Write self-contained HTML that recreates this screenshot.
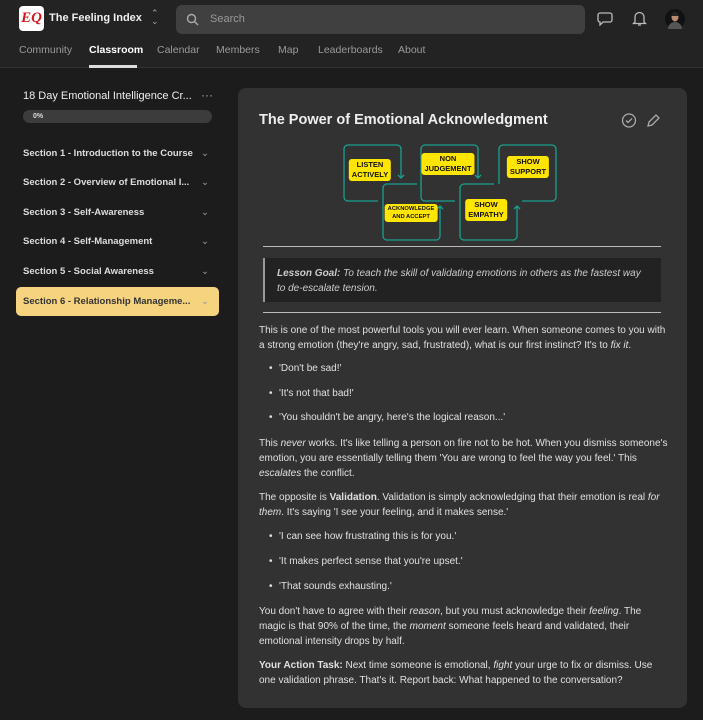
<!DOCTYPE html>
<html><head><style>
*{margin:0;padding:0;box-sizing:border-box}
body{width:703px;height:720px;background:#1c1c1c;font-family:"Liberation Sans",sans-serif;color:#e6e6e6;overflow:hidden;position:relative}
.hdr{position:absolute;left:0;top:0;width:703px;height:68px;background:#232323;border-bottom:1px solid #333}
.logo{position:absolute;left:19px;top:6px;width:25px;height:25px;background:#fff;border-radius:4px;color:#d8141c;font:italic bold 15px "Liberation Serif",serif;text-align:center;line-height:25px}
.brand{position:absolute;left:49px;top:12px;font-size:11px;font-weight:bold;color:#f0f0f0}
.search{position:absolute;left:176px;top:5px;width:409px;height:29px;background:#404040;border-radius:6px;color:#999;font-size:11px;line-height:29px;padding-left:34px}
.nav{position:absolute;top:44px;font-size:10.5px;color:#9a9a9a}
.main{position:absolute;left:238px;top:88px;width:449px;height:620px;background:#323232;border-radius:8px}
.side{position:absolute;left:16px;width:203px;height:29px;font-size:9.5px;font-weight:bold;color:#ddd;line-height:29px;padding-left:7px}
.chev{position:absolute;right:10px;top:0;color:#999;font-weight:normal}
.txt{position:absolute;left:259px;width:410px;font-size:10px;line-height:15px;color:#e0e0e0}
.li{position:absolute;left:279px;font-size:10px;color:#e0e0e0}
.li:before{content:"•";position:absolute;left:-10px}
.lab{position:absolute;background:#ffe500;color:#111;font-size:7.5px;font-weight:bold;text-align:center;line-height:10px;border-radius:3px;padding:1px 3px;transform:translate(-50%,-50%);white-space:nowrap}
</style></head><body>
<div class="hdr">
<div class="logo">EQ</div>
<div class="brand">The Feeling Index</div>
<div style="position:absolute;left:151px;top:9px;color:#aaa;font-size:9px;line-height:8px">⌃<br>⌄</div>
<div class="search">Search</div>
<svg style="position:absolute;left:186px;top:13px" width="13" height="13" viewBox="0 0 13 13"><circle cx="5.5" cy="5.5" r="4" fill="none" stroke="#aaa" stroke-width="1.4"/><path d="M8.5 8.5L12 12" stroke="#aaa" stroke-width="1.4"/></svg>
<svg style="position:absolute;left:597px;top:11px" width="16" height="15" viewBox="0 0 16 15"><path d="M3 2h10a2 2 0 0 1 2 2v5a2 2 0 0 1-2 2H6l-3 3v-3a2 2 0 0 1-2-2V4a2 2 0 0 1 2-2z" fill="none" stroke="#bbb" stroke-width="1.3"/></svg>
<svg style="position:absolute;left:632px;top:10px" width="15" height="17" viewBox="0 0 15 17"><path d="M3 12V7a4.5 4.5 0 0 1 9 0v5l1.5 1.5h-12z M6 15h3" fill="none" stroke="#bbb" stroke-width="1.3"/></svg>
<svg style="position:absolute;left:665px;top:9px" width="20" height="20" viewBox="0 0 20 20"><circle cx="10" cy="10" r="10" fill="#111"/><path d="M3 20a7 7 0 0 1 14 0z" fill="#555"/><ellipse cx="10" cy="8" rx="3.5" ry="4.5" fill="#b88a70"/><path d="M6.5 7a3.5 4 0 0 1 7 0z" fill="#222"/></svg>
<div class="nav" style="left:19px">Community</div>
<div class="nav" style="left:89px;color:#fff;font-weight:bold">Classroom</div>
<div style="position:absolute;left:89px;top:65px;width:48px;height:3px;background:#ddd"></div>
<div class="nav" style="left:157px">Calendar</div>
<div class="nav" style="left:216px">Members</div>
<div class="nav" style="left:278px">Map</div>
<div class="nav" style="left:318px">Leaderboards</div>
<div class="nav" style="left:398px">About</div>
</div>

<div style="position:absolute;left:23px;top:90px;font-size:11px;color:#eee">18 Day Emotional Intelligence Cr...</div>
<div style="position:absolute;left:201px;top:88px;color:#aaa;font-size:12px">···</div>
<div style="position:absolute;left:23px;top:110px;width:189px;height:13px;background:#3c3c3c;border-radius:7px;font-size:7px;font-weight:bold;line-height:13px;padding-left:10px;color:#ddd">0%</div>
<div class="side" style="top:139px">Section 1 - Introduction to the Course<span class="chev">⌄</span></div>
<div class="side" style="top:168px">Section 2 - Overview of Emotional I...<span class="chev">⌄</span></div>
<div class="side" style="top:198px">Section 3 - Self-Awareness<span class="chev">⌄</span></div>
<div class="side" style="top:227px">Section 4 - Self-Management<span class="chev">⌄</span></div>
<div class="side" style="top:257px">Section 5 - Social Awareness<span class="chev">⌄</span></div>
<div class="side" style="top:287px;background:#f6d37f;color:#333;border-radius:5px">Section 6 - Relationship Manageme...<span class="chev">⌄</span></div>

<div class="main"></div>
<div style="position:absolute;left:259px;top:112px;font-size:14.5px;font-weight:bold;color:#eee">The Power of Emotional Acknowledgment</div>
<svg style="position:absolute;left:620px;top:112px" width="42" height="17" viewBox="0 0 42 17"><circle cx="9" cy="8.5" r="6.5" fill="none" stroke="#aaa" stroke-width="1.3"/><path d="M6 8.5l2 2 4-4" fill="none" stroke="#aaa" stroke-width="1.3"/><path d="M28 14l1-4 7-7 3 3-7 7z" fill="none" stroke="#aaa" stroke-width="1.3"/></svg>

<svg style="position:absolute;left:0;top:0" width="703" height="260" viewBox="0 0 703 260" fill="none" stroke="#19a08e" stroke-width="1.3">
<path d="M378 201H348a4 4 0 0 1-4-4V149a4 4 0 0 1 4-4h49a4 4 0 0 1 4 4v29"/><path d="M398 175l3 3 3-3"/>
<path d="M417 184H387a4 4 0 0 0-4 4v48a4 4 0 0 0 4 4h49a4 4 0 0 0 4-4v-30"/><path d="M437 209l3-3 3 3"/>
<path d="M455 201H425a4 4 0 0 1-4-4V149a4 4 0 0 1 4-4h49a4 4 0 0 1 4 4v29"/><path d="M475 175l3 3 3-3"/>
<path d="M494 184H464a4 4 0 0 0-4 4v48a4 4 0 0 0 4 4h49a4 4 0 0 0 4-4v-30"/><path d="M514 209l3-3 3 3"/>
<path d="M499 184V149a4 4 0 0 1 4-4h49a4 4 0 0 1 4 4v48a4 4 0 0 1-4 4h-30"/>
</svg>
<div class="lab" style="left:370px;top:170px">LISTEN<br>ACTIVELY</div>
<div class="lab" style="left:448px;top:164px">NON<br>JUDGEMENT</div>
<div class="lab" style="left:528px;top:167px">SHOW<br>SUPPORT</div>
<div class="lab" style="left:411px;top:213px;font-size:5.8px;line-height:8px">ACKNOWLEDGE<br>AND ACCEPT</div>
<div class="lab" style="left:486px;top:210px">SHOW<br>EMPATHY</div>

<div style="position:absolute;left:263px;top:246px;width:398px;height:1px;background:#bbb"></div>
<div style="position:absolute;left:263px;top:258px;width:398px;height:44px;background:#222;border-left:2px solid #999;padding:8px 12px;font-size:10px;line-height:15px;font-style:italic;color:#ccc"><b>Lesson Goal:</b> To teach the skill of validating emotions in others as the fastest way to de-escalate tension.</div>
<div style="position:absolute;left:263px;top:312px;width:398px;height:1px;background:#bbb"></div>

<div class="txt" style="top:323px">This is one of the most powerful tools you will ever learn. When someone comes to you with a strong emotion (they're angry, sad, frustrated), what is our first instinct? It's to <i>fix it</i>.</div>
<div class="li" style="top:363px">'Don't be sad!'</div>
<div class="li" style="top:388px">'It's not that bad!'</div>
<div class="li" style="top:412px">'You shouldn't be angry, here's the logical reason...'</div>
<div class="txt" style="top:436px">This <i>never</i> works. It's like telling a person on fire not to be hot. When you dismiss someone's emotion, you are essentially telling them 'You are wrong to feel the way you feel.' This <i>escalates</i> the conflict.</div>
<div class="txt" style="top:490px">The opposite is <b>Validation</b>. Validation is simply acknowledging that their emotion is real <i>for them</i>. It's saying 'I see your feeling, and it makes sense.'</div>
<div class="li" style="top:531px">'I can see how frustrating this is for you.'</div>
<div class="li" style="top:556px">'It makes perfect sense that you're upset.'</div>
<div class="li" style="top:581px">'That sounds exhausting.'</div>
<div class="txt" style="top:604px">You don't have to agree with their <i>reason</i>, but you must acknowledge their <i>feeling</i>. The magic is that 90% of the time, the <i>moment</i> someone feels heard and validated, their emotional intensity drops by half.</div>
<div class="txt" style="top:658px"><b>Your Action Task:</b> Next time someone is emotional, <i>fight</i> your urge to fix or dismiss. Use one validation phrase. That's it. Report back: What happened to the conversation?</div>
</body></html>
